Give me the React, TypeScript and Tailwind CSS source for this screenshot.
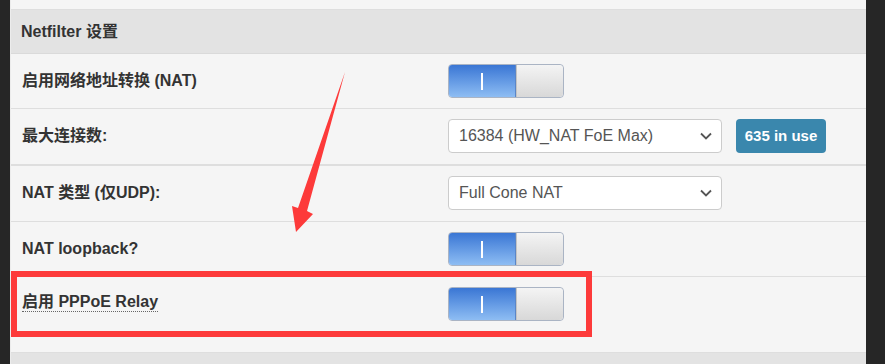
import React from "react";

const font = { fontFamily: '"Liberation Sans", "Noto Sans CJK SC", Arial, sans-serif' };

const Toggle = () => (
    <div className="flex h-[34px] w-[116px] overflow-hidden rounded-[4px] border border-[#aab4c4]">
        <div className="flex w-[67px] items-center justify-center bg-linear-to-b from-[#3a76d4] to-[#8ebdf3] border-r border-[#5a86c8]">
            <span className="block h-[17px] w-[2px] bg-white" />
        </div>
        <div className="flex-1 bg-linear-to-b from-[#f4f4f4] to-[#d8d8d8] border-l border-[#c4c4c4] rounded-r-[4px]" />
    </div>
);

const Select = ({ value }: { value: string }) => (
    <div className="flex h-[34px] w-[274px] items-center justify-between rounded-[4px] border border-[#cccccc] bg-white pl-[10px] pr-[9px] text-[16px] text-[#555555]">
        <span>{value}</span>
        <svg width="12" height="8" viewBox="0 0 12 8" fill="none">
            <path d="M1 1.5l5 5 5-5" stroke="#555" strokeWidth="1.8" />
        </svg>
    </div>
);

const Row = ({ label, children, className = "" }: { label: React.ReactNode; children: React.ReactNode; className?: string }) => (
    <div className={`flex items-start pt-[10px] ${className}`}>
        <div className="flex h-[34px] w-[437px] items-center pl-[11px] text-[16px] font-bold text-[#333333]">{label}</div>
        <div className="flex items-center gap-[14px]">{children}</div>
    </div>
);

export default function App() {
    return (
        <div className="flex h-[364px] w-[885px] overflow-hidden bg-[#262626]" style={font}>
            <div className="w-[10px] shrink-0" />
            <div className="relative flex w-[856px] shrink-0 flex-col bg-[#f5f5f5] border-l border-[#ececec]">
                <div className="h-[10px] shrink-0 border-b border-[#dedede]" />
                <div className="flex h-[44px] shrink-0 items-center border-b border-[#dadada] bg-[#e3e3e3] pl-[10px] text-[16px] font-bold text-[#333333]">
                    Netfilter 设置
                </div>
                <Row label="启用网络地址转换 (NAT)" className="h-[55px] border-b border-[#dedede]">
                    <Toggle />
                </Row>
                <Row label="最大连接数:" className="h-[57px] border-b-2 border-[#dedede]">
                    <Select value="16384 (HW_NAT FoE Max)" />
                    <div className="flex h-[34px] w-[90px] items-center justify-center rounded-[4px] bg-[#3a87ad] text-[15px] font-bold text-white">
                        635 in use
                    </div>
                </Row>
                <Row label="NAT 类型 (仅UDP):" className="h-[56px] border-b border-[#dedede]">
                    <Select value="Full Cone NAT" />
                </Row>
                <Row label="NAT loopback?" className="h-[55px] border-b border-[#dedede]">
                    <Toggle />
                </Row>
                <Row
                    label={<span className="border-b border-dotted border-[#666] leading-[19px] mt-[-4px]">启用 PPPoE Relay</span>}
                    className="h-[76px] border-b border-[#dedede]"
                >
                    <Toggle />
                </Row>
                <div className="flex-1 bg-[#e3e3e3]" />

                {/* annotation overlay */}
                <div className="pointer-events-none absolute left-[0px] top-[271px] h-[66px] w-[581px] border-[6px] border-[#fd3a3a]" />
                <svg className="pointer-events-none absolute left-0 top-0" width="856" height="364">
                    <polygon points="334,72 296,211 302,214 285,232 281,206 287,208" fill="#fd3a3a" />
                </svg>
            </div>
            <div className="flex-1" />
        </div>
    );
}
